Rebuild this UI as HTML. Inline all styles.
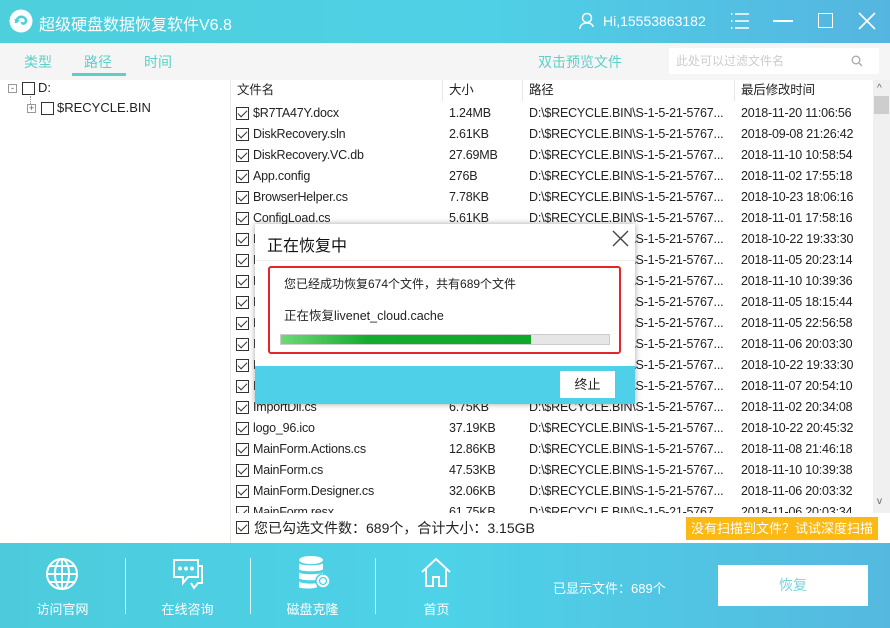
<!DOCTYPE html>
<html><head><meta charset="utf-8"><style>
*{margin:0;padding:0;box-sizing:border-box}
body{width:890px;height:628px;overflow:hidden;background:#fff;font-family:"Liberation Sans","Noto Sans CJK SC",sans-serif;font-size:13px;color:#222;position:relative}
.abs{position:absolute}
#title{left:0;top:0;width:890px;height:43px;background:linear-gradient(90deg,#4ecfdc 0%,#4fd0e6 55%,#55b5e0 100%);color:#fff}
#tabs{left:0;top:43px;width:890px;height:37px;background:#f5f5f5}
.tab{position:absolute;top:9px;font-size:14px;color:#5dcfc8}
.row{position:absolute;left:230px;width:643px;height:21px;line-height:21px;font-size:12.5px;letter-spacing:-0.2px;white-space:nowrap}
.row span{position:absolute}
.cb{position:absolute;left:6px;top:4px;width:13px;height:13px;border:1px solid #333;background:#fff}
.cb:after{content:"";position:absolute;left:3px;top:0px;width:4px;height:8px;border:solid #333;border-width:0 1.5px 1.5px 0;transform:rotate(45deg)}
.n{left:23px}.s{left:219px}.p{left:299px}.d{left:511px}
#bottom{left:0;top:543px;width:890px;height:85px;background:linear-gradient(90deg,#4dcbdc 0%,#4dd2e8 50%,#55b9df 100%);color:#fff}
.bi{position:absolute;top:0;width:125px;text-align:center}
.bi .lb{position:absolute;top:56px;width:100%;font-size:13px}
.sep{position:absolute;top:15px;width:1px;height:56px;background:#e0f6fa}
</style></head><body>
<div id="title" class="abs">
 <svg class="abs" style="left:9px;top:9px" width="24" height="24" viewBox="0 0 24 24"><circle cx="12" cy="12" r="11.5" fill="#fff"/><path d="M7 14c0-4 3-7 7-6 3 1 4 4 2 6-1 1-3 1-3-1" stroke="#4ecfdc" stroke-width="2.5" fill="none"/><path d="M5 10l3 4 3-3" fill="#4ecfdc"/></svg>
 <div class="abs" style="left:39px;top:11px;font-size:16px">超级硬盘数据恢复软件V6.8</div>
 <svg class="abs" style="left:578px;top:12px" width="18" height="18" viewBox="0 0 18 18" fill="none" stroke="#fff" stroke-width="1.5"><circle cx="9" cy="6" r="4.5"/><path d="M2 17c0-4 3-6 7-6s6 2 6 4"/></svg>
 <div class="abs" style="left:603px;top:13px;font-size:14px">Hi,15553863182</div>
 <svg class="abs" style="left:730px;top:12px" width="20" height="18" viewBox="0 0 20 18" stroke="#fff" stroke-width="1.5"><path d="M5 2h14M5 9h14M5 16h14M1 2h1.5M1 9h1.5M1 16h1.5"/></svg>
 <div class="abs" style="left:773px;top:20px;width:20px;height:2px;background:#fff"></div>
 <div class="abs" style="left:818px;top:13px;width:15px;height:15px;border:1.5px solid #fff"></div>
 <svg class="abs" style="left:858px;top:12px" width="18" height="18" viewBox="0 0 18 18" stroke="#fff" stroke-width="1.6"><path d="M1 1l16 16M17 1L1 17"/></svg>
</div>
<div id="tabs" class="abs">
 <div class="tab" style="left:24px">类型</div>
 <div class="tab" style="left:84px">路径</div>
 <div class="abs" style="left:72px;top:30px;width:54px;height:3px;background:#5dcfc8"></div>
 <div class="tab" style="left:144px">时间</div>
 <div class="tab" style="left:538px">双击预览文件</div>
 <div class="abs" style="left:669px;top:5px;width:210px;height:26px;background:#fff;font-size:12px;color:#ccc;line-height:26px;padding-left:7px">此处可以过滤文件名</div>
 <svg class="abs" style="left:851px;top:12px" width="12" height="12" viewBox="0 0 12 12" fill="none" stroke="#aaa" stroke-width="1.3"><circle cx="5" cy="5" r="3.8"/><path d="M8 8l3 3"/></svg>
</div>
<!-- tree -->
<div class="abs" style="left:8px;top:84px;width:9px;height:9px;border:1px solid #999;font-size:9px;line-height:6px;text-align:center;color:#555">-</div>
<div class="abs" style="left:22px;top:82px;width:13px;height:13px;border:1px solid #333"></div>
<div class="abs" style="left:38px;top:80px;font-size:13px">D:</div>
<div class="abs" style="left:30px;top:96px;width:1px;height:8px;border-left:1px dotted #999"></div>
<div class="abs" style="left:27px;top:104px;width:9px;height:9px;border:1px solid #999;font-size:9px;line-height:7px;text-align:center;color:#555">+</div>
<div class="abs" style="left:41px;top:102px;width:13px;height:13px;border:1px solid #333"></div>
<div class="abs" style="left:57px;top:100px;font-size:13px">$RECYCLE.BIN</div>
<div class="abs" style="left:230px;top:80px;width:1px;height:463px;background:#e6e6e6"></div>
<!-- header -->
<div class="row" style="top:80px"><span style="left:7px">文件名</span><span class="s">大小</span><span class="p">路径</span><span class="d">最后修改时间</span></div>
<div class="abs" style="left:442px;top:80px;width:1px;height:21px;background:#e6e6e6"></div>
<div class="abs" style="left:522px;top:80px;width:1px;height:21px;background:#e6e6e6"></div>
<div class="abs" style="left:734px;top:80px;width:1px;height:21px;background:#e6e6e6"></div>
<div class="abs" style="left:873px;top:80px;width:17px;height:433px;background:#f0f0f0"></div>
<div class="abs" style="left:877px;top:83px;font-size:10px;color:#666">^</div>
<div class="abs" style="left:874px;top:96px;width:15px;height:18px;background:#cdcdcd"></div>
<div class="abs" style="left:877px;top:496px;font-size:10px;color:#666">v</div>
<div class="abs" style="left:230px;top:103px;width:643px;height:410px;overflow:hidden">
<div style="position:relative;top:-103px">
<div class="row" style="left:0;top:103px"><i class="cb"></i><span class="n">$R7TA47Y.docx</span><span class="s">1.24MB</span><span class="p">D:\$RECYCLE.BIN\S-1-5-21-5767...</span><span class="d">2018-11-20 11:06:56</span></div>
<div class="row" style="left:0;top:124px"><i class="cb"></i><span class="n">DiskRecovery.sln</span><span class="s">2.61KB</span><span class="p">D:\$RECYCLE.BIN\S-1-5-21-5767...</span><span class="d">2018-09-08 21:26:42</span></div>
<div class="row" style="left:0;top:145px"><i class="cb"></i><span class="n">DiskRecovery.VC.db</span><span class="s">27.69MB</span><span class="p">D:\$RECYCLE.BIN\S-1-5-21-5767...</span><span class="d">2018-11-10 10:58:54</span></div>
<div class="row" style="left:0;top:166px"><i class="cb"></i><span class="n">App.config</span><span class="s">276B</span><span class="p">D:\$RECYCLE.BIN\S-1-5-21-5767...</span><span class="d">2018-11-02 17:55:18</span></div>
<div class="row" style="left:0;top:187px"><i class="cb"></i><span class="n">BrowserHelper.cs</span><span class="s">7.78KB</span><span class="p">D:\$RECYCLE.BIN\S-1-5-21-5767...</span><span class="d">2018-10-23 18:06:16</span></div>
<div class="row" style="left:0;top:208px"><i class="cb"></i><span class="n">ConfigLoad.cs</span><span class="s">5.61KB</span><span class="p">D:\$RECYCLE.BIN\S-1-5-21-5767...</span><span class="d">2018-11-01 17:58:16</span></div>
<div class="row" style="left:0;top:229px"><i class="cb"></i><span class="n">Icon.cs</span><span class="s">2.11KB</span><span class="p">D:\$RECYCLE.BIN\S-1-5-21-5767...</span><span class="d">2018-10-22 19:33:30</span></div>
<div class="row" style="left:0;top:250px"><i class="cb"></i><span class="n">Icon.cs</span><span class="s">2.11KB</span><span class="p">D:\$RECYCLE.BIN\S-1-5-21-5767...</span><span class="d">2018-11-05 20:23:14</span></div>
<div class="row" style="left:0;top:271px"><i class="cb"></i><span class="n">Icon.cs</span><span class="s">2.11KB</span><span class="p">D:\$RECYCLE.BIN\S-1-5-21-5767...</span><span class="d">2018-11-10 10:39:36</span></div>
<div class="row" style="left:0;top:292px"><i class="cb"></i><span class="n">Icon.cs</span><span class="s">2.11KB</span><span class="p">D:\$RECYCLE.BIN\S-1-5-21-5767...</span><span class="d">2018-11-05 18:15:44</span></div>
<div class="row" style="left:0;top:313px"><i class="cb"></i><span class="n">Icon.cs</span><span class="s">2.11KB</span><span class="p">D:\$RECYCLE.BIN\S-1-5-21-5767...</span><span class="d">2018-11-05 22:56:58</span></div>
<div class="row" style="left:0;top:334px"><i class="cb"></i><span class="n">Icon.cs</span><span class="s">2.11KB</span><span class="p">D:\$RECYCLE.BIN\S-1-5-21-5767...</span><span class="d">2018-11-06 20:03:30</span></div>
<div class="row" style="left:0;top:355px"><i class="cb"></i><span class="n">Icon.cs</span><span class="s">2.11KB</span><span class="p">D:\$RECYCLE.BIN\S-1-5-21-5767...</span><span class="d">2018-10-22 19:33:30</span></div>
<div class="row" style="left:0;top:376px"><i class="cb"></i><span class="n">Icon.cs</span><span class="s">2.11KB</span><span class="p">D:\$RECYCLE.BIN\S-1-5-21-5767...</span><span class="d">2018-11-07 20:54:10</span></div>
<div class="row" style="left:0;top:397px"><i class="cb"></i><span class="n">ImportDll.cs</span><span class="s">6.75KB</span><span class="p">D:\$RECYCLE.BIN\S-1-5-21-5767...</span><span class="d">2018-11-02 20:34:08</span></div>
<div class="row" style="left:0;top:418px"><i class="cb"></i><span class="n">logo_96.ico</span><span class="s">37.19KB</span><span class="p">D:\$RECYCLE.BIN\S-1-5-21-5767...</span><span class="d">2018-10-22 20:45:32</span></div>
<div class="row" style="left:0;top:439px"><i class="cb"></i><span class="n">MainForm.Actions.cs</span><span class="s">12.86KB</span><span class="p">D:\$RECYCLE.BIN\S-1-5-21-5767...</span><span class="d">2018-11-08 21:46:18</span></div>
<div class="row" style="left:0;top:460px"><i class="cb"></i><span class="n">MainForm.cs</span><span class="s">47.53KB</span><span class="p">D:\$RECYCLE.BIN\S-1-5-21-5767...</span><span class="d">2018-11-10 10:39:38</span></div>
<div class="row" style="left:0;top:481px"><i class="cb"></i><span class="n">MainForm.Designer.cs</span><span class="s">32.06KB</span><span class="p">D:\$RECYCLE.BIN\S-1-5-21-5767...</span><span class="d">2018-11-06 20:03:32</span></div>
<div class="row" style="left:0;top:502px"><i class="cb"></i><span class="n">MainForm.resx</span><span class="s">61.75KB</span><span class="p">D:\$RECYCLE.BIN\S-1-5-21-5767...</span><span class="d">2018-11-06 20:03:34</span></div>
</div></div>
<!-- status line -->
<div class="row" style="top:516px;height:24px;line-height:24px;font-size:14px;letter-spacing:0"><i class="cb" style="top:5px"></i><span style="left:24px">您已勾选文件数：689个，合计大小：3.15GB</span></div>
<div class="abs" style="left:686px;top:517px;width:192px;height:23px;background:#fcb813;color:#fff;font-size:13px;line-height:23px;text-align:center">没有扫描到文件？试试深度扫描</div>
<!-- bottom bar -->
<div id="bottom" class="abs">
 <div class="bi" style="left:0">
  <svg style="position:absolute;left:45px;top:14px" width="34" height="34" viewBox="0 0 34 34" fill="none" stroke="#fff" stroke-width="2"><circle cx="17" cy="17" r="15"/><ellipse cx="17" cy="17" rx="7" ry="15"/><path d="M2 17h30M17 2v30M5 9h24M5 25h24"/></svg>
  <div class="lb">访问官网</div></div>
 <div class="sep" style="left:125px"></div>
 <div class="bi" style="left:125px">
  <svg style="position:absolute;left:46px;top:14px" width="34" height="34" viewBox="0 0 34 34" fill="none" stroke="#fff" stroke-width="2"><path d="M3 3h24v17H17l-5 6v-6H3z"/><path d="M27 9h4v17h-4l-4 5-3-5"/><circle cx="9" cy="11.5" r="1" fill="#fff"/><circle cx="15" cy="11.5" r="1" fill="#fff"/><circle cx="21" cy="11.5" r="1" fill="#fff"/></svg>
  <div class="lb">在线咨询</div></div>
 <div class="sep" style="left:250px"></div>
 <div class="bi" style="left:250px">
  <svg style="position:absolute;left:47px;top:12px" width="34" height="36" viewBox="0 0 34 36" fill="#fff"><ellipse cx="14" cy="5" rx="12" ry="4"/><path d="M2 8c0 3 24 3 24 0v6c0 3-24 3-24 0zM2 17c0 3 24 3 24 0v6c0 3-24 3-24 0zM2 26c0 3 18 3 18 2v4c0 2-18 2-18 0z"/><circle cx="26" cy="26" r="7" stroke="#4dd0e6" stroke-width="1.5"/><circle cx="26" cy="26" r="3.5" fill="none" stroke="#4dd0e6" stroke-width="1.3"/></svg>
  <div class="lb">磁盘克隆</div></div>
 <div class="sep" style="left:375px"></div>
 <div class="bi" style="left:374px">
  <svg style="position:absolute;left:46px;top:14px" width="32" height="32" viewBox="0 0 32 32" fill="none" stroke="#fff" stroke-width="2"><path d="M2 15L16 2l14 13M6 12v17h7v-9h6v9h7V12"/></svg>
  <div class="lb">首页</div></div>
 <div class="abs" style="left:553px;top:35px;font-size:13px">已显示文件：689个</div>
 <div class="abs" style="left:718px;top:22px;width:150px;height:41px;background:#fff;color:#7fd0dc;font-size:14px;line-height:41px;text-align:center">恢复</div>
</div>
<!-- dialog -->
<div class="abs" style="left:255px;top:224px;width:380px;height:180px;background:#fff;box-shadow:0 0 6px rgba(0,0,0,.35)">
 <div class="abs" style="left:12px;top:8px;font-size:16px;color:#111">正在恢复中</div>
 <svg class="abs" style="left:357px;top:6px" width="17" height="17" viewBox="0 0 17 17" stroke="#444" stroke-width="1.4"><path d="M1 1l15 15M16 1L1 16"/></svg>
 <div class="abs" style="left:0;top:36px;width:380px;height:1px;background:#eee"></div>
 <div class="abs" style="left:13px;top:42px;width:353px;height:88px;border:2.5px solid #e3262b;border-radius:3px"></div>
 <div class="abs" style="left:29px;top:51px;font-size:12px">您已经成功恢复674个文件，共有689个文件</div>
 <div class="abs" style="left:29px;top:81px;font-size:12.5px">正在恢复livenet_cloud.cache</div>
 <div class="abs" style="left:25px;top:110px;width:330px;height:11px;background:#e6e6e6;border:1px solid #ccc"></div>
 <div class="abs" style="left:26px;top:111px;width:250px;height:9px;background:linear-gradient(90deg,#6fd87a,#14ac2c 35%,#0fa82a)"></div>
 <div class="abs" style="left:0;top:142px;width:380px;height:38px;background:#4dd0e8"></div>
 <div class="abs" style="left:305px;top:147px;width:55px;height:27px;background:#fff;font-size:13px;line-height:27px;text-align:center">终止</div>
</div>
</body></html>
